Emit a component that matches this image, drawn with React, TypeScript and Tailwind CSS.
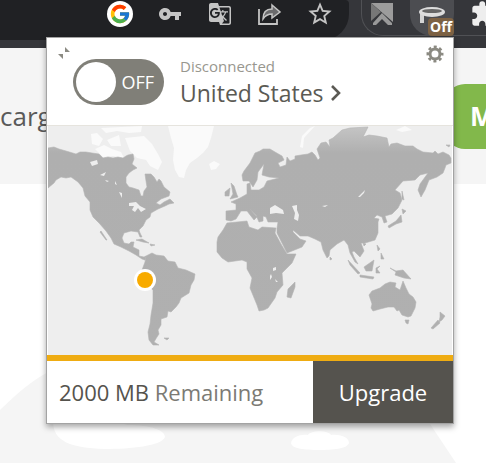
import {useState} from 'react';
import type {ReactNode} from 'react';
import {FcGoogle} from 'react-icons/fc';
import {MdExtension, MdGTranslate, MdStarOutline, MdVpnKey} from 'react-icons/md';

const LAND = [
  // north america
  'M48 148L54 147L59 149L66 151L76 154L80 152L86 152L92 153L99 154L103 158L108 157L113 158L118 157L123 158L126 156L128 155L133 154L134 159L132 164L137 168L133 170L129 173L126 177L126 183L129 187L133 188L139 190L141 196L143 196L144 191L147 187L146 181L145 174L151 174L154 177L157 182L159 179L161 181L164 187L170 192L169 196L161 199L156 203L160 205L164 202L170 199L174 203L169 204L165 206L158 209L151 213L150 217L146 220L143 226L139 230L140 233L142 237L140 237L138 232L131 231L124 233L122 238L124 243L129 244L131 242L134 242L133 247L139 250L139 256L144 257L146 256L145 260L142 259L136 255L129 251L121 247L114 244L111 238L106 231L99 223L93 217L90 210L90 202L85 196L83 188L78 182L71 177L66 178L61 177L56 180L54 183L48 188Z',
  // south america
  'M146 256L152 253L156 255L164 256L168 261L175 262L178 268L186 270L195 274L194 280L191 285L189 293L181 298L179 303L176 307L171 312L168 311L167 317L161 319L161 325L158 330L159 334L157 337L154 342L159 345L153 345L149 340L148 332L150 324L151 315L153 303L153 290L148 285L145 279L142 270L145 262Z',
  // europe and asia
  'M243 181L242 175L244 171L250 163L255 153L260 151L263 149L270 149L275 152L282 156L284 160L278 163L280 167L286 165L287 157L290 161L295 159L295 156L301 155L308 154L312 152L315 155L318 160L320 158L317 149L321 143L326 142L330 147L329 140L333 138L342 130L350 128L368 127L363 137L369 135L377 136L387 138L389 147L391 144L397 143L405 146L413 146L417 149L423 152L433 153L435 151L438 154L443 152L449 155L451 158L451 163L446 165L445 168L443 173L437 177L429 180L425 190L421 197L418 190L420 184L428 173L420 175L415 180L403 181L395 190L400 193L402 200L398 208L392 214L385 216L387 222L384 223L382 217L377 215L374 218L379 219L378 222L378 233L375 240L365 243L361 243L364 251L360 257L354 251L352 252L354 257L358 264L355 262L350 253L348 245L344 240L337 244L330 250L329 256L327 258L323 250L321 242L315 239L308 236L300 236L293 230L293 232L300 239L306 241L302 247L287 253L282 243L277 233L277 228L278 222L268 222L266 217L263 216L263 221L259 222L256 215L250 209L257 217L254 220L247 211L241 211L236 219L231 221L226 220L226 211L236 210L236 204L231 202L240 198L247 194L247 184L250 183L251 190L259 190L264 187L267 181L279 178L269 177L262 175L264 164L258 172L257 180L253 187L249 181Z',
  // africa
  'M227 223L237 222L247 221L249 227L258 230L262 227L276 228L275 233L281 244L287 254L296 254L292 263L282 273L283 285L277 292L275 298L268 308L264 310L259 311L257 305L250 288L252 278L247 269L247 262L242 260L228 262L222 258L217 252L217 242L218 237L223 230Z',
  // australia
  'M369 295L372 291L380 288L385 284L390 282L396 283L395 287L400 290L403 281L406 288L409 294L413 297L416 302L415 308L413 312L411 316L408 317L402 315L399 310L397 311L394 307L388 307L380 309L373 311L371 308L372 304Z',
  // madagascar, new zealand, tasmania
  'M288 289L295 282L295 287L291 298L287 297Z',
  'M440 312L445 316L442 320L439 322L440 317ZM438 320L440 323L433 329L431 328Z',
  'M405 320L409 320L408 324L406 323Z',
  // indonesia, philippines, new guinea
  'M348 260L360 273L358 274L350 265ZM360 275L374 277L373 279L360 277Z',
  'M364 267L374 260L372 271L366 271ZM376 268L380 266L377 269L380 273L376 273Z',
  'M390 268L396 271L403 270L411 279L404 278L395 275L396 272Z',
  'M377 245L380 249L378 251ZM381 253L384 259L381 259ZM363 243L366 244L364 246Z',
  // japan and sakhalin
  'M402 209L406 211L403 214ZM401 215L402 222L396 224L389 228L388 226L396 221ZM402 191L404 200L402 199Z',
  // british isles
  'M231 183L234 186L237 195L238 197L230 199L233 194ZM225 192L230 188L229 196L225 196Z',
  // caribbean, falklands, sri lanka
  'M136 240L142 239L149 243L143 242ZM150 244L155 245L151 246ZM164 338L169 338L167 340ZM330 257L332 259L330 260ZM446 145L450 145L449 147Z',
  'M101 231L107 240L106 240L100 232Z',
].join('');

const ICE = [
  'M168 126L214 126L211 138L208 147L203 153L197 158L190 163L186 170L184 178L179 177L175 170L173 160L174 148L171 138Z',
  'M209 164L214 161L220 164L216 169L211 170Z',
  'M91 134L97 133L103 139L99 146L92 144ZM95 149L104 145L112 149L121 152L124 158L113 156L103 157Z',
  'M101 128L142 126L141 132L129 133L117 131L106 133ZM107 140L119 135L121 146L111 146ZM125 138L144 136L152 144L158 154L162 162L158 170L150 166L146 160L137 158L130 151Z',
  'M300 147L302 136L310 128L315 126L304 138L303 148ZM396 130L405 126L412 130L402 132Z',
].join('');

const WATER = [
  'M270 208L275 205L283 210L284 214L276 213L270 214Z',
  'M292 206L297 205L297 210L299 215L298 221L294 219L295 213Z',
  'M90 162L97 160L98 164L92 166ZM100 175L106 172L104 176ZM119 192L122 193L122 198ZM105 180L109 181L107 182ZM115 181L117 185L115 184Z',
  'M129 203L136 202L140 206L146 209L141 212L138 208L135 212L132 210L134 206L129 206Z',
  'M358 197L365 190L364 193L360 197ZM322 206L328 205L325 207ZM273 268L276 267L276 270L273 271Z',
  'M270 280L272 277L271 274L270 276ZM275 279L278 282L276 282Z',
].join('');

const WorldMap = () => (
  <svg viewBox="48 126 404 229" className="block w-full" role="img" aria-label="World map">
    <defs>
      <linearGradient id="land" x1="0" y1="0" x2="0" y2="1">
        <stop offset="0" stopColor="#c4c4c4"/>
        <stop offset="0.12" stopColor="#afafaf"/>
        <stop offset="1" stopColor="#b0b0b0"/>
      </linearGradient>
    </defs>
    <path d={ICE} fill="#fafafa"/>
    <path d={LAND} fill="url(#land)" stroke="#b4b4b4" strokeWidth="0.6" strokeLinejoin="round"/>
    <path d={WATER} fill="#eeeeee"/>
    <circle cx="145" cy="280" r="11" fill="#fff"/>
    <circle cx="145" cy="280" r="8" fill="#f8ab00"/>
  </svg>
);

const ShareIcon = () => (
  <svg width={26} height={26} viewBox="0 0 26 26" fill="none" stroke="currentColor" strokeWidth="1.8">
    <path d="M2 8V23H20V18"/>
    <path d="M15 4L23 11L15 17V13C11 13 8 15 6 18C6 12 9 8 15 8Z" fill="#6b6b6d" strokeWidth="1.5"/>
  </svg>
);

const BookmarkIcon = () => (
  <svg width={24} height={24} viewBox="0 0 24 24" className="mt-0.5 shrink-0">
    <path d="M1 1H23V20L1 1Z" fill="#9c9c9c"/>
    <path d="M1 1V19L11 10Z" fill="#777"/>
    <path d="M12 11L22 21V23H18L12 17L6 23H3V21Z" fill="#999"/>
  </svg>
);

const TunnelIcon = () => (
  <svg width={28} height={24} viewBox="0 0 28 24">
    <path d="M2 7V19H6V11H23V7Z" fill="#d4d4d4"/>
    <ellipse cx="14" cy="8" rx="13" ry="5" fill="#dddddd"/>
    <ellipse cx="14" cy="7" rx="10" ry="2" fill="#666"/>
  </svg>
);

const GearIcon = () => (
  <svg width={18} height={18} viewBox="0 0 18 18" fill="none" stroke="#8b8a82">
    <circle cx="9" cy="9" r="5" strokeWidth="3"/>
    <circle cx="9" cy="9" r="7" strokeWidth="3" strokeDasharray="2.9 2.598" strokeDashoffset="1.45"/>
  </svg>
);

const CollapseIcon = () => (
  <svg width={14} height={14} viewBox="0 0 14 14" fill="#8b8a82">
    <path d="M8 1V6H13ZM1 8H6V13Z"/>
  </svg>
);

const ToolbarButton = ({label, children}: {label: string; children: ReactNode}) => (
  <button type="button" aria-label={label} className="flex size-[26px] items-center justify-center text-[#c4c4c4]">
    {children}
  </button>
);

const Toolbar = () => (
  <header className="flex h-12 items-start overflow-hidden bg-[#35363a]">
    <div className="flex h-10 flex-1 justify-end gap-6 rounded-tr-sm rounded-br-[26px] bg-[#202124] pt-px pr-4">
      <ToolbarButton label="Search with Google">
        <span className="flex size-[26px] items-center justify-center rounded-full bg-white">
          <FcGoogle size={22}/>
        </span>
      </ToolbarButton>
      <ToolbarButton label="Passwords"><MdVpnKey size={24}/></ToolbarButton>
      <ToolbarButton label="Translate"><MdGTranslate size={24}/></ToolbarButton>
      <ToolbarButton label="Share"><ShareIcon/></ToolbarButton>
      <ToolbarButton label="Bookmark"><MdStarOutline size={28} className="shrink-0"/></ToolbarButton>
    </div>
    <div className="ml-3 flex h-9 w-[125px] items-start gap-4 rounded-bl-[22px] border-b border-l border-[#505155] pl-2">
      <BookmarkIcon/>
      <button
        type="button"
        aria-label="VPN extension"
        className="relative flex h-9 w-11 shrink-0 justify-center rounded-b-[22px] bg-[#4c4d51] pt-1"
      >
        <TunnelIcon/>
        <span className="absolute right-0 bottom-0 rounded-sm bg-[#7d6244] px-0.5 text-sm leading-[18px] font-bold text-white">
          Off
        </span>
      </button>
      <MdExtension size={28} className="shrink-0 text-[#eeeeee]"/>
    </div>
  </header>
);

const VpnPopup = () => {
  const [isOn, setIsOn] = useState(false);

  return (
    <section className="absolute top-[37px] right-8 left-[46px] border border-[#a3a3a3] bg-white shadow-[0_3px_6px_rgba(0,0,0,0.35)]">
      <div className="flex h-[88px] items-start border-b border-[#e6e4de]">
        <button type="button" aria-label="Collapse" className="mt-2 ml-2.5 w-4">
          <CollapseIcon/>
        </button>
        <button
          type="button"
          role="switch"
          aria-checked={isOn}
          onClick={() => setIsOn(!isOn)}
          className="mt-[21px] flex h-[46px] w-[91px] items-center justify-between rounded-full bg-[#807f78] pr-2.5 pl-[3px] text-lg text-white"
        >
          <span className="size-10 rounded-full bg-white"/>
          {isOn ? 'ON' : 'OFF'}
        </button>
        <div className="mt-[18px] ml-4 flex-1">
          <p className="text-[15px] leading-5 text-[#98978f]">Disconnected</p>
          <button type="button" className="flex items-center gap-1.5 text-[23px] leading-[34px] text-[#5b5a54]">
            United States
            <svg width={12} height={18} viewBox="0 0 12 18" fill="none" stroke="currentColor" strokeWidth="2.6">
              <path d="M2 2L9 9L2 16"/>
            </svg>
          </button>
        </div>
        <button type="button" aria-label="Settings" className="mt-[7px] mr-[9px]">
          <GearIcon/>
        </button>
      </div>
      <div className="border-x border-white bg-[#eeeeee]">
        <WorldMap/>
      </div>
      <div className="h-1.5 bg-[#efac12]"/>
      <div className="flex h-[62px] items-stretch">
        <p className="flex-1 self-center pl-3 text-[22px] text-[#7b7a74]">
          <span className="font-medium text-[#55534d]">2000 MB</span> Remaining
        </p>
        <button type="button" className="w-[140px] bg-[#55534e] text-[22px] font-medium text-white">
          Upgrade
        </button>
      </div>
    </section>
  );
};

const App = () => (
  <div className="relative min-h-screen overflow-hidden bg-white font-['Open_Sans','Noto_Sans',sans-serif]">
    <Toolbar/>
    <nav className="flex h-[136px] items-center justify-between bg-[#f5f5f5]">
      <a href="#" className="text-[26px] font-medium text-[#5a5a5a]">carg</a>
      <button
        type="button"
        className="h-[65px] w-[41px] overflow-hidden rounded-l-[20px] bg-[#82b84b] pl-[25px] text-left text-[26px] font-bold text-white"
      >
        M
      </button>
    </nav>
    <svg viewBox="0 0 486 279" className="block w-full" aria-hidden="true">
      <path d="M0 226C16 211 28 199 48 188L200 150L420 225L456 279H0Z" fill="#f5f5f5"/>
      <path d="M53 237C70 232 110 236 128 241C150 241 165 246 165 253C162 262 130 265 105 265C70 264 53 257 53 237Z" fill="#fff"/>
      <path d="M291 259C292 253 300 250 308 251C311 246 328 246 331 251C342 250 349 254 349 259C347 265 333 266 319 266C305 266 292 265 291 259Z" fill="#fff"/>
    </svg>
    <VpnPopup/>
  </div>
);

export default App;
